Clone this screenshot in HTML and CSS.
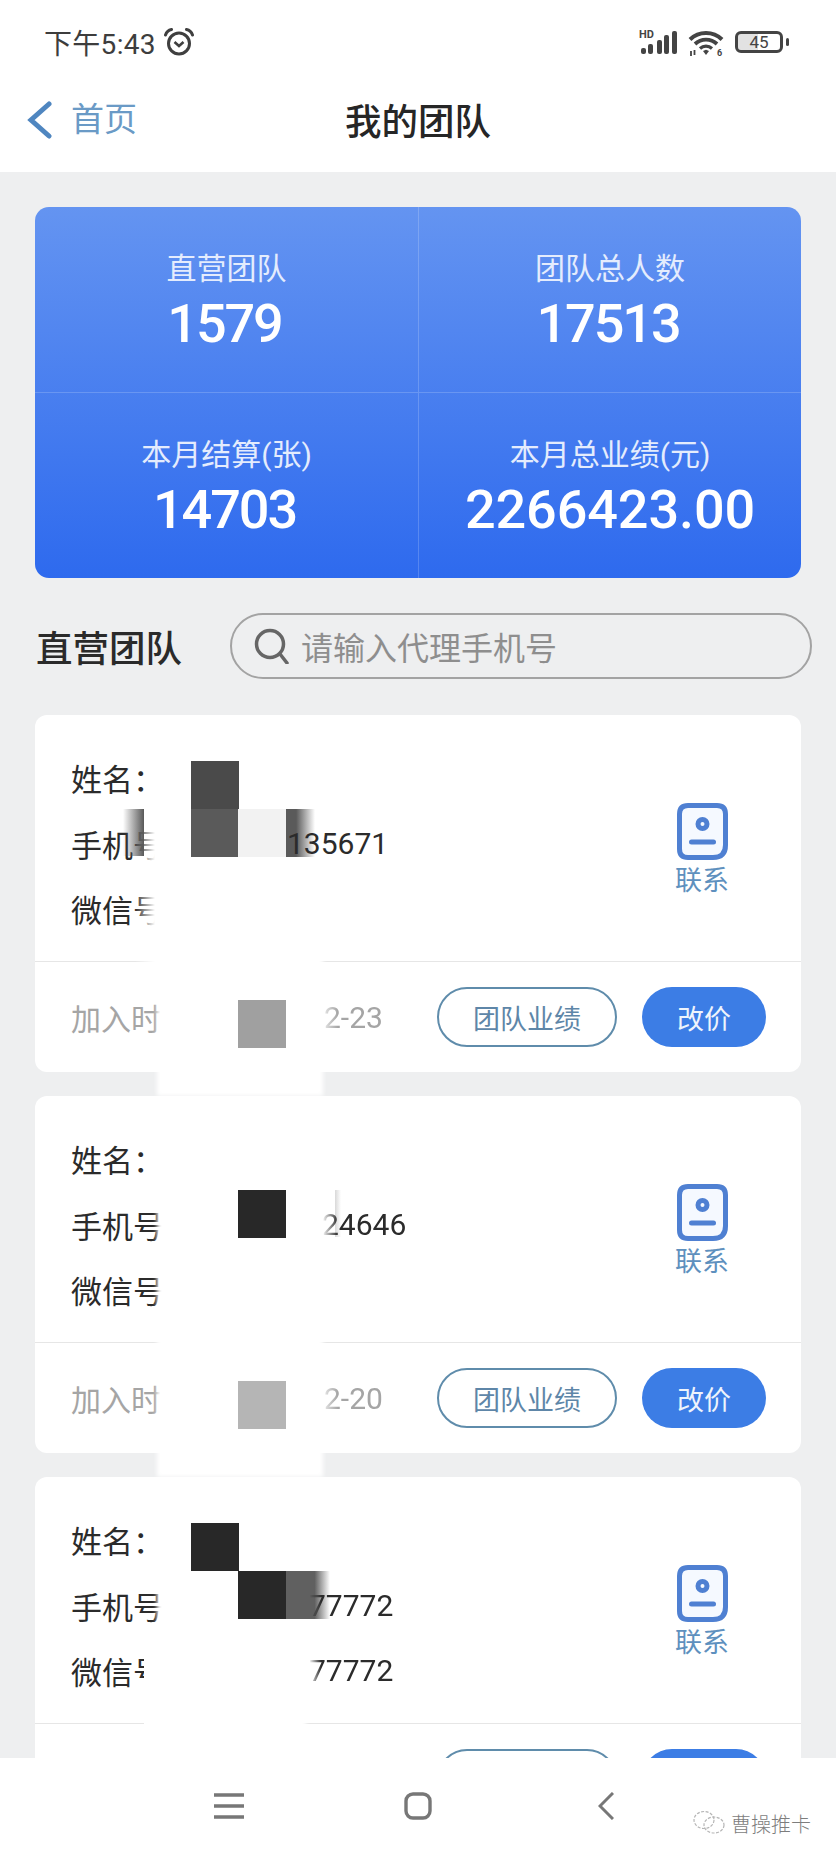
FILE: index.html
```html
<!DOCTYPE html>
<html lang="zh-CN">
<head>
    <meta charset="UTF-8">
    <meta name="viewport" content="width=device-width, initial-scale=1.0">
    <title>我的团队</title>
    <link rel="stylesheet" href="styles.css">
</head>
<body>
    <header class="top">
        <div class="status">
            <span class="time">下午5:43</span>
            <svg class="alarm" width="30" height="28" viewBox="0 0 30 28" fill="none" stroke="#3f3f3f">
                <circle cx="15" cy="15.5" r="10.5" stroke-width="3"/>
                <path d="M10.5 14 L15 18 L19.5 14" stroke-width="2.6"/>
                <path d="M1.5 7 Q3 2.5 7.5 1.5 M22.5 1.5 Q27 2.5 28.5 7" stroke-width="3" stroke-linecap="round"/>
            </svg>
            <div class="status-right">
                <svg width="38" height="26" viewBox="0 0 38 26" fill="#444">
                    <text x="0" y="9" class="hd">HD</text>
                    <rect x="2" y="19" width="5" height="6" rx="2"/>
                    <rect x="9" y="15" width="5" height="10" rx="2"/>
                    <rect x="18" y="11" width="5" height="14" rx="2"/>
                    <rect x="25" y="6" width="5" height="19" rx="2"/>
                    <rect x="33" y="2" width="5" height="23" rx="2"/>
                </svg>
                <svg width="36" height="27" viewBox="0 0 36 27" fill="none" stroke="#444">
                    <path d="M2 10.5 A23 23 0 0 1 34 10.5" stroke-width="4"/>
                    <path d="M7 15 A16 16 0 0 1 29 15" stroke-width="3.8"/>
                    <path d="M12 19.5 A9 9 0 0 1 24 19.5" stroke-width="3.2"/>
                    <path d="M15 22 L18 20.8 L21 22 L18 26 Z" fill="#444" stroke="none"/>
                    <path d="M3 22 V27 M6.5 21 V26" stroke-width="1.8"/>
                    <text x="29" y="27" class="wifi-six">6</text>
                </svg>
                <div class="battery">45</div>
            </div>
        </div>
        <nav class="bar">
            <div class="back">
                <svg width="26" height="38" viewBox="0 0 26 38" fill="none" stroke="#4f86c0" stroke-width="5" stroke-linecap="round">
                    <path d="M22 3 L4 19 L22 35"/>
                </svg>
                <span>首页</span>
            </div>
            <h1 class="page-title">我的团队</h1>
        </nav>
    </header>

    <main class="content">
        <section class="hero">
            <div class="stat">
                <div class="stat-label">直营团队</div>
                <div class="stat-num">1579</div>
            </div>
            <div class="stat">
                <div class="stat-label">团队总人数</div>
                <div class="stat-num">17513</div>
            </div>
            <div class="stat">
                <div class="stat-label">本月结算(张)</div>
                <div class="stat-num">14703</div>
            </div>
            <div class="stat">
                <div class="stat-label">本月总业绩(元)</div>
                <div class="stat-num stat-num-long">2266423.00</div>
            </div>
        </section>

        <div class="search-row">
            <h2 class="section-title">直营团队</h2>
            <div class="search">
                <svg width="36" height="36" viewBox="0 0 36 36" fill="none" stroke="#666" stroke-width="3.5" stroke-linecap="round">
                    <circle cx="16" cy="16" r="13.5"/>
                    <path d="M26 26 L33 35"/>
                </svg>
                <input type="text" placeholder="请输入代理手机号">
            </div>
        </div>

        <!-- first agent -->
        <article class="card card-a">
            <div class="card-top">
                <div class="rows">
                    <div class="row"><span class="row-label">姓名：</span></div>
                    <div class="row"><span class="row-label">手机号：</span><span class="row-value">135671</span></div>
                    <div class="row"><span class="row-label">微信号：</span></div>
                </div>
                <div class="contact">
                    <svg width="51" height="57" viewBox="0 0 51 57" fill="#f5f9ff" stroke="#4f80d2" stroke-width="5">
                        <path d="M11 2.5 H40 Q48.5 2.5 48.5 11 V42 Q48.5 54.5 36 54.5 H11 Q2.5 54.5 2.5 46 V11 Q2.5 2.5 11 2.5 Z"/>
                        <circle cx="25.5" cy="21" r="4.5"/>
                        <path d="M14.5 39 H36.5" stroke-linecap="round"/>
                    </svg>
                    <span>联系</span>
                </div>
            </div>
            <div class="card-bottom">
                <span class="joined">加入时间：</span><span class="joined-date">2-23</span>
                <button class="btn btn-line">团队业绩</button>
                <button class="btn btn-fill">改价</button>
            </div>
            <div class="patch patch-main"></div>
            <div class="patch patch-fade"></div>
            <div class="strip strip-left"></div>
            <div class="block c1 r1 tone-a"></div>
            <div class="block c1 r2 tone-b"></div>
            <div class="block c2 r2 tone-light"></div>
            <div class="block c3 r2 fade-a"></div>
            <div class="block c2 r3 tone-c"></div>
        </article>

        <!-- second agent -->
        <article class="card card-b">
            <div class="card-top">
                <div class="rows">
                    <div class="row"><span class="row-label">姓名：</span></div>
                    <div class="row"><span class="row-label">手机号：</span><span class="row-value">24646</span></div>
                    <div class="row"><span class="row-label">微信号：</span></div>
                </div>
                <div class="contact">
                    <svg width="51" height="57" viewBox="0 0 51 57" fill="#f5f9ff" stroke="#4f80d2" stroke-width="5">
                        <path d="M11 2.5 H40 Q48.5 2.5 48.5 11 V42 Q48.5 54.5 36 54.5 H11 Q2.5 54.5 2.5 46 V11 Q2.5 2.5 11 2.5 Z"/>
                        <circle cx="25.5" cy="21" r="4.5"/>
                        <path d="M14.5 39 H36.5" stroke-linecap="round"/>
                    </svg>
                    <span>联系</span>
                </div>
            </div>
            <div class="card-bottom">
                <span class="joined">加入时间：</span><span class="joined-date">2-20</span>
                <button class="btn btn-line">团队业绩</button>
                <button class="btn btn-fill">改价</button>
            </div>
            <div class="patch patch-main"></div>
            <div class="strip strip-right"></div>
            <div class="block c2 r2 tone-dark"></div>
            <div class="block c2 r3 tone-d"></div>
        </article>

        <!-- third agent, runs under the bottom bar -->
        <article class="card card-c">
            <div class="card-top">
                <div class="rows">
                    <div class="row"><span class="row-label">姓名：</span></div>
                    <div class="row"><span class="row-label">手机号：</span><span class="row-value">77772</span></div>
                    <div class="row"><span class="row-label">微信号：</span><span class="row-value">77772</span></div>
                </div>
                <div class="contact">
                    <svg width="51" height="57" viewBox="0 0 51 57" fill="#f5f9ff" stroke="#4f80d2" stroke-width="5">
                        <path d="M11 2.5 H40 Q48.5 2.5 48.5 11 V42 Q48.5 54.5 36 54.5 H11 Q2.5 54.5 2.5 46 V11 Q2.5 2.5 11 2.5 Z"/>
                        <circle cx="25.5" cy="21" r="4.5"/>
                        <path d="M14.5 39 H36.5" stroke-linecap="round"/>
                    </svg>
                    <span>联系</span>
                </div>
            </div>
            <div class="card-bottom">
                <span class="joined">加入时间：</span>
                <button class="btn btn-line">团队业绩</button>
                <button class="btn btn-fill">改价</button>
            </div>
            <div class="patch patch-main"></div>
            <div class="patch patch-side"></div>
            <div class="block c1 r1 tone-dark"></div>
            <div class="block c2 r2 tone-dark"></div>
            <div class="block c3 r2 fade-c"></div>
        </article>
    </main>

    <footer class="softkeys">
        <svg width="30" height="26" viewBox="0 0 30 26" fill="none" stroke="#777" stroke-width="3.6">
            <path d="M0 2 H30 M0 13 H30 M0 24 H30"/>
        </svg>
        <svg class="key-home" width="28" height="28" viewBox="0 0 28 28" fill="none" stroke="#777" stroke-width="3.4">
            <rect x="2" y="2" width="24" height="24" rx="7"/>
        </svg>
        <svg class="key-back" width="16" height="28" viewBox="0 0 16 28" fill="none" stroke="#777" stroke-width="3">
            <path d="M15 1 L2 14 L15 27"/>
        </svg>
        <div class="mark">
            <svg width="32" height="26" viewBox="0 0 32 26" fill="none" stroke="#b5b5b5" stroke-width="1.2" stroke-dasharray="3 1.5">
                <ellipse cx="11" cy="10" rx="10" ry="8.5"/>
                <ellipse cx="21" cy="15" rx="10" ry="8"/>
            </svg>
            <span>曹操推卡</span>
        </div>
    </footer>
</body>
</html>
```

FILE: styles.css
```css
* {
    box-sizing: border-box;
}

body {
    margin: 0;
    height: 1859px;
    display: flex;
    flex-direction: column;
    overflow: hidden;
    background-color: #eeeff0;
    color: #2b2b2b;
    font-family: Roboto, "Noto Sans CJK SC", sans-serif;
}

/* header */
.top {
    height: 172px;
    flex-shrink: 0;
    background-color: #fff;
}

.status {
    height: 84px;
    padding: 0 48px 0 44px;
    display: flex;
    align-items: center;
}

.time {
    font-size: 28px;
    color: #3d3d3d;
    letter-spacing: 0.3px;
}

.alarm {
    margin-left: 8px;
}

.status-right {
    margin-left: auto;
    display: flex;
    align-items: center;
    gap: 11px;
}

.hd {
    font-size: 11px;
    font-weight: 700;
    fill: #444;
}

.wifi-six {
    font-size: 9px;
    font-weight: 700;
    fill: #444;
    stroke: none;
}

.battery {
    position: relative;
    width: 48px;
    height: 22px;
    margin-right: 5px;
    border: 3px solid #444;
    border-radius: 6px;
    background: linear-gradient(to right, #e2e2e2 48%, #fff 48%);
    background-clip: padding-box;
    color: #444;
    font-size: 17px;
    line-height: 16px;
    text-align: center;
}

.battery::after {
    content: "";
    position: absolute;
    right: -9px;
    top: 4px;
    width: 3px;
    height: 8px;
    border-radius: 2px;
    background-color: #444;
}

.bar {
    position: relative;
    height: 70px;
    display: flex;
    align-items: center;
    justify-content: center;
}

.back {
    position: absolute;
    left: 27px;
    top: 17px;
    display: flex;
    align-items: center;
    gap: 18px;
    color: #6a9ac6;
    font-size: 33px;
    line-height: 38px;
}

.page-title {
    margin: 0;
    font-size: 36.5px;
    font-weight: 500;
    color: #262626;
}

/* main area */
.content {
    flex: 1;
    min-height: 0;
    overflow: hidden;
    padding: 35px 35px 0;
}

.hero {
    height: 371px;
    display: grid;
    grid-template-columns: 384px 382px;
    grid-template-rows: 185px 186px;
    border-radius: 14px;
    overflow: hidden;
    background: linear-gradient(to bottom, #6494f1, #2e6aee);
    color: #fff;
}

.stat {
    padding-top: 42px;
    text-align: center;
}

.stat:nth-child(odd) {
    border-right: 1px solid rgba(255, 255, 255, 0.18);
}

.stat:nth-child(n+3) {
    border-top: 1px solid rgba(255, 255, 255, 0.18);
}

.stat-label {
    font-size: 30px;
    line-height: 40px;
    color: #e4ecfd;
}

.stat-num {
    margin-top: 5px;
    padding-right: 4px;
    font-size: 54px;
    font-weight: 500;
    line-height: 60px;
    letter-spacing: -2.1px;
}

.stat-num-long {
    padding-right: 0;
    letter-spacing: -0.1px;
}

.search-row {
    margin: 35px -11px 36px 1px;
    display: flex;
    align-items: center;
    gap: 48px;
}

.section-title {
    margin: 0;
    flex-shrink: 0;
    font-size: 36.5px;
    font-weight: 500;
    color: #2a2a2a;
}

.search {
    flex: 1;
    height: 66px;
    padding: 0 22px;
    display: flex;
    align-items: center;
    gap: 11px;
    border: 2px solid #a3a3a3;
    border-radius: 33px;
}

.search input {
    flex: 1;
    min-width: 0;
    border: none;
    outline: none;
    background: transparent;
    padding: 0;
    font-family: "Noto Sans CJK SC", sans-serif;
    font-size: 32px;
}

.search input::placeholder {
    color: #8e8e8e;
    opacity: 1;
}

/* agent cards */
.card {
    position: relative;
    height: 357px;
    margin-bottom: 24px;
    border-radius: 12px;
    background-color: #fff;
}

.card-top {
    height: 247px;
    padding: 30px 73px 0 36px;
    display: flex;
    justify-content: space-between;
    border-bottom: 1px solid #e6e6e6;
}

.row {
    height: 65.5px;
    display: flex;
    align-items: center;
}

.row-label {
    width: 120px;
    font-size: 31px;
    white-space: nowrap;
}

.row-value {
    position: relative;
    z-index: 2;
    font-size: 30px;
    color: #2b2b2b;
}

.card-a .row-value {
    margin-left: 96px;
}

.card-b .row-value {
    margin-left: 131px;
    -webkit-mask-image: linear-gradient(to right, transparent, #000 16px);
    mask-image: linear-gradient(to right, transparent, #000 16px);
}

.card-c .row-value {
    margin-left: 118px;
    -webkit-mask-image: linear-gradient(to right, transparent, #000 12px);
    mask-image: linear-gradient(to right, transparent, #000 12px);
}

.contact {
    margin-top: 58px;
    width: 52px;
    display: flex;
    flex-direction: column;
    align-items: center;
    color: #5e90be;
    font-size: 27px;
    line-height: 32px;
    white-space: nowrap;
}

.contact svg {
    flex-shrink: 0;
    margin-bottom: 5px;
}

.card-bottom {
    height: 110px;
    padding: 0 35px 0 36px;
    display: flex;
    align-items: center;
    color: #a5a5a5;
    font-size: 30px;
}

.joined {
    width: 120px;
    white-space: nowrap;
}

.joined-date {
    position: relative;
    z-index: 2;
    margin-left: 133px;
    -webkit-mask-image: linear-gradient(to right, rgba(0, 0, 0, 0.3), #000 14px);
    mask-image: linear-gradient(to right, rgba(0, 0, 0, 0.3), #000 14px);
}

.btn {
    height: 60px;
    border-radius: 30px;
    padding: 0;
    font-family: "Noto Sans CJK SC", sans-serif;
    font-size: 27px;
}

.btn-line {
    width: 180px;
    margin-left: auto;
    border: 2px solid #5f8cab;
    background-color: #fff;
    color: #5e86a8;
}

.btn-fill {
    width: 124px;
    margin-left: 25px;
    border: none;
    background-color: #3c7de5;
    color: #eef4fc;
}

/* scribbled out parts of the screenshot */
.patch {
    position: absolute;
    z-index: 1;
    background-color: #fff;
}

.patch-main {
    left: 122px;
    width: 166px;
    top: 30px;
    bottom: -24px;
    filter: blur(2px);
}

.patch-fade {
    left: 100px;
    width: 30px;
    top: 160px;
    height: 92px;
    background: linear-gradient(to right, transparent, #fff 20px);
}

.card-a .patch-fade {
    top: 90px;
    height: 162px;
}

.card-c .patch-main {
    width: 149px;
}

.patch-side {
    left: 109px;
    width: 20px;
    top: 160px;
    height: 92px;
}

.strip {
    position: absolute;
    z-index: 1;
    top: 94px;
    height: 47px;
}

.strip-left {
    left: 88px;
    width: 21px;
    background: linear-gradient(to right, transparent, #585858);
}

.strip-right {
    left: 300px;
    width: 6px;
    background: linear-gradient(to right, #d8d8d8, transparent);
}

.block {
    position: absolute;
    z-index: 1;
    width: 48px;
    height: 48px;
}

.c1 { left: 156px; }
.c2 { left: 203px; }
.c3 { left: 251px; }
.r1 { top: 46px; }
.r2 { top: 94px; }
.r3 { top: 285px; }

.tone-a { background-color: #4a4a4a; }
.tone-b { background-color: #5a5a5a; }
.tone-c { background-color: #a0a0a0; }
.tone-d { background-color: #b5b5b5; }
.tone-dark { background-color: #282828; }
.tone-light { background-color: #f2f2f2; }

.fade-a {
    width: 29px;
    background: linear-gradient(to right, #5a5a5a 35%, transparent);
}

.fade-c {
    width: 44px;
    background: linear-gradient(to right, #606060 65%, transparent);
}

/* android keys */
.softkeys {
    position: relative;
    z-index: 3;
    height: 101px;
    flex-shrink: 0;
    padding: 0 25px 5px 214px;
    display: flex;
    align-items: center;
    background-color: #fff;
}

.key-home {
    margin-left: 160px;
}

.key-back {
    margin-left: 166px;
}

.mark {
    margin-left: auto;
    margin-top: 34px;
    display: flex;
    align-items: center;
    gap: 6px;
    color: #7d7d7d;
    font-size: 20px;
    font-weight: 300;
}
```
